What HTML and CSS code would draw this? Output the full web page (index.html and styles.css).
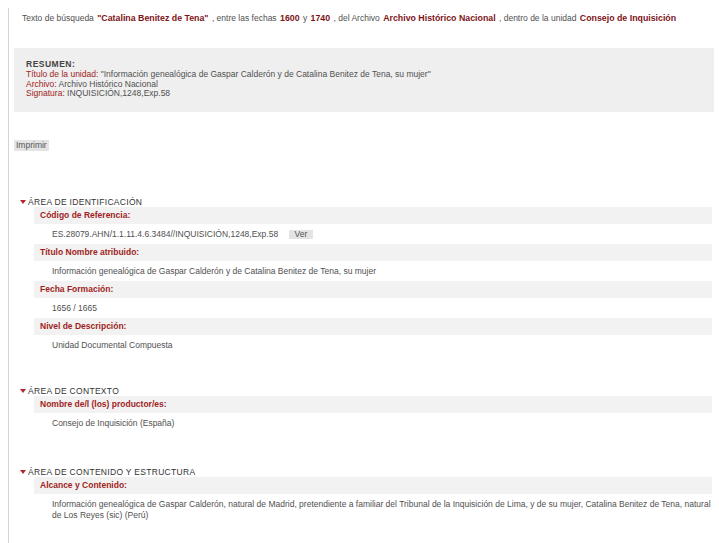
FILE: index.html
```html
<!DOCTYPE html>
<html lang="es">

<head>
    <meta charset="UTF-8">
    <title>Descripción de unidad</title>
    <link rel="stylesheet" href="styles.css">
</head>

<body>
    <div class="page">
        <!-- criterios de búsqueda -->
        <p class="search-line">
            Texto de búsqueda <b>"Catalina Benitez de Tena"</b> , entre las fechas <b>1600</b> y <b>1740</b> , del Archivo
            <b>Archivo Histórico Nacional</b> , dentro de la unidad <b>Consejo de Inquisición</b>
        </p>

        <div class="summary">
            <div class="summary-title">RESUMEN:</div>
            <div><span class="red">Título de la unidad:</span> "Información genealógica de Gaspar Calderón y de Catalina Benitez de Tena, su mujer"</div>
            <div><span class="red">Archivo:</span> Archivo Histórico Nacional</div>
            <div><span class="red">Signatura:</span> INQUISICIÓN,1248,Exp.58</div>
        </div>

        <div class="print"><span class="btn">Imprimir</span></div>

        <div class="area">
            <div class="area-title"><span class="arrow"></span>ÁREA DE IDENTIFICACIÓN</div>
            <div class="label">Código de Referencia:</div>
            <div class="value">ES.28079.AHN/1.1.11.4.6.3484//INQUISICIÓN,1248,Exp.58 <span class="btn ver">Ver</span></div>
            <div class="label">Título Nombre atribuido:</div>
            <div class="value">Información genealógica de Gaspar Calderón y de Catalina Benitez de Tena, su mujer</div>
            <div class="label">Fecha Formación:</div>
            <div class="value">1656 / 1665</div>
            <div class="label">Nivel de Descripción:</div>
            <div class="value">Unidad Documental Compuesta</div>
        </div>

        <div class="area">
            <div class="area-title"><span class="arrow"></span>ÁREA DE CONTEXTO</div>
            <div class="label">Nombre de/l (los) productor/es:</div>
            <div class="value">Consejo de Inquisición (España)</div>
        </div>

        <div class="area">
            <div class="area-title"><span class="arrow"></span>ÁREA DE CONTENIDO Y ESTRUCTURA</div>
            <div class="label">Alcance y Contenido:</div>
            <div class="value">Información genealógica de Gaspar Calderón, natural de Madrid, pretendiente a familiar del Tribunal de la Inquisición de Lima, y de su mujer, Catalina Benitez de Tena, natural de Los Reyes (sic) (Perú)</div>
        </div>
    </div>
</body>

</html>
```

FILE: styles.css
```css
html,
body {
    margin: 0;
    padding: 0;
    background: #fff;
    overflow: hidden;
}

body {
    font-family: "Liberation Sans", Arial, sans-serif;
    font-size: 8.5px;
    color: #505050;
}

.page {
    margin: 8px 5px 0 8px;
    padding: 0 0 40px 5px;
    border-left: 1px solid #d4d4d4;
    min-height: 600px;
}

.search-line {
    margin: 0;
    padding: 4px 0 0 8px;
    line-height: 12px;
    white-space: nowrap;
}

.search-line b {
    color: #7d1419;
    font-size: 8.8px;
    margin: 0 1px;
}

.summary {
    margin-top: 24px;
    background: #efefef;
    padding: 12px 12px 13px 12px;
    line-height: 9.8px;
}

.summary-title {
    font-weight: bold;
    color: #444;
    letter-spacing: 0.5px;
}

.red {
    color: #a01e22;
}

.print {
    margin-top: 28px;
    line-height: 11px;
}

.btn {
    display: inline-block;
    background: #e4e4e4;
    color: #555;
    padding: 0 3px;
    line-height: 11px;
}

.ver {
    margin-left: 8px;
    padding: 0 6px;
    line-height: 9px;
}

.print .btn {
    padding: 0 2px;
}

.area {
    margin-top: 46px;
}

.area + .area {
    margin-top: 31px;
}

.area:last-child {
    margin-top: 34px;
}

.area-title {
    color: #333;
    line-height: 10px;
    padding-left: 6px;
    letter-spacing: 0.3px;
}

.arrow {
    display: inline-block;
    width: 0;
    height: 0;
    border-left: 3px solid transparent;
    border-right: 3px solid transparent;
    border-top: 4px solid #b3262b;
    margin-right: 2px;
    vertical-align: 1px;
}

.label {
    margin: 0 2px 0 20px;
    background: #f2f2f2;
    color: #a01e22;
    font-weight: bold;
    line-height: 17px;
    padding-left: 6px;
}

.value {
    margin-left: 38px;
    padding-top: 5px;
    line-height: 11px;
    min-height: 15px;
}
```
